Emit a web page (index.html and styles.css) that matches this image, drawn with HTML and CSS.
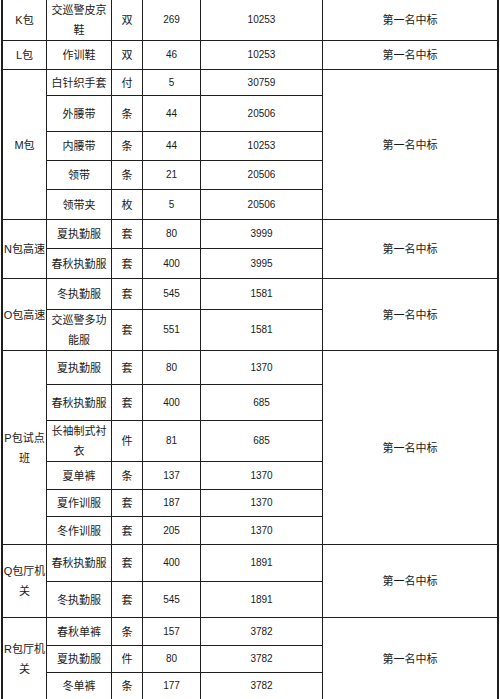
FILE: index.html
```html
<!DOCTYPE html>
<html lang="zh-CN">
<head>
<meta charset="utf-8">
<title>中标结果</title>
<link rel="stylesheet" href="styles.css">
</head>
<body>
<table class="bid">
  <colgroup>
    <col class="c-pkg">
    <col class="c-item">
    <col class="c-unit">
    <col class="c-qty">
    <col class="c-price">
    <col class="c-res">
  </colgroup>
  <tbody>
    <tr class="h38"><td class="pkg">K包</td><td>交巡警皮京鞋</td><td>双</td><td class="num">269</td><td class="num">10253</td><td class="res">第一名中标</td></tr>
    <tr class="h29"><td class="pkg">L包</td><td>作训鞋</td><td>双</td><td class="num">46</td><td class="num">10253</td><td class="res">第一名中标</td></tr>
    <tr class="h26"><td class="pkg" rowspan="5">M包</td><td>白针织手套</td><td>付</td><td class="num">5</td><td class="num">30759</td><td class="res" rowspan="5">第一名中标</td></tr>
    <tr class="h36"><td>外腰带</td><td>条</td><td class="num">44</td><td class="num">20506</td></tr>
    <tr class="h29"><td>内腰带</td><td>条</td><td class="num">44</td><td class="num">10253</td></tr>
    <tr class="h29"><td>领带</td><td>条</td><td class="num">21</td><td class="num">20506</td></tr>
    <tr class="h30"><td>领带夹</td><td>枚</td><td class="num">5</td><td class="num">20506</td></tr>
    <tr class="h29"><td class="pkg" rowspan="2">N包高速</td><td>夏执勤服</td><td>套</td><td class="num">80</td><td class="num">3999</td><td class="res" rowspan="2">第一名中标</td></tr>
    <tr class="h30"><td>春秋执勤服</td><td>套</td><td class="num">400</td><td class="num">3995</td></tr>
    <tr class="h31"><td class="pkg" rowspan="2">O包高速</td><td>冬执勤服</td><td>套</td><td class="num">545</td><td class="num">1581</td><td class="res" rowspan="2">第一名中标</td></tr>
    <tr class="h41"><td>交巡警多功能服</td><td>套</td><td class="num">551</td><td class="num">1581</td></tr>
    <tr class="h34"><td class="pkg" rowspan="6">P包试点班</td><td>夏执勤服</td><td>套</td><td class="num">80</td><td class="num">1370</td><td class="res" rowspan="6">第一名中标</td></tr>
    <tr class="h36"><td>春秋执勤服</td><td>套</td><td class="num">400</td><td class="num">685</td></tr>
    <tr class="h41"><td>长袖制式衬衣</td><td>件</td><td class="num">81</td><td class="num">685</td></tr>
    <tr class="h28"><td>夏单裤</td><td>条</td><td class="num">137</td><td class="num">1370</td></tr>
    <tr class="h27"><td>夏作训服</td><td>套</td><td class="num">187</td><td class="num">1370</td></tr>
    <tr class="h28"><td>冬作训服</td><td>套</td><td class="num">205</td><td class="num">1370</td></tr>
    <tr class="h37"><td class="pkg" rowspan="2">Q包厅机关</td><td>春秋执勤服</td><td>套</td><td class="num">400</td><td class="num">1891</td><td class="res" rowspan="2">第一名中标</td></tr>
    <tr class="h36"><td>冬执勤服</td><td>套</td><td class="num">545</td><td class="num">1891</td></tr>
    <tr class="h28"><td class="pkg" rowspan="3">R包厅机关</td><td>春秋单裤</td><td>条</td><td class="num">157</td><td class="num">3782</td><td class="res" rowspan="3">第一名中标</td></tr>
    <tr class="h27"><td>夏执勤服</td><td>件</td><td class="num">80</td><td class="num">3782</td></tr>
    <tr class="h27"><td>冬单裤</td><td>条</td><td class="num">177</td><td class="num">3782</td></tr>
  </tbody>
</table>
</body>
</html>
```
FILE: styles.css
```css
html, body {
  margin: 0;
  padding: 0;
  background: #ffffff;
}

.bid {
  margin: 0 0 0 1px;
  width: 498px;
  table-layout: fixed;
  border-collapse: separate;
  border-spacing: 0;
  border-left: 2px solid #1f1f1f;
  border-right: 1px solid #1f1f1f;
  border-bottom: 1px solid #1f1f1f;
  font-family: "Liberation Sans", "Noto Sans CJK SC", sans-serif;
  font-size: 11px;
  line-height: 20px;
  color: #1a1a1a;
}

.c-pkg { width: 44px; }
.c-item { width: 65px; }
.c-unit { width: 31px; }
.c-qty { width: 58px; }
.c-price { width: 122px; }
.c-res { width: 175px; }

.bid td {
  box-sizing: border-box;
  padding: 0;
  border-right: 1px solid #1f1f1f;
  border-bottom: 1px solid #1f1f1f;
  text-align: center;
  vertical-align: middle;
  word-break: break-all;
}

.bid td.num {
  font-size: 10px;
}

.h26 { height: 26px; }
.h27 { height: 27px; }
.h28 { height: 28px; }
.h29 { height: 29px; }
.h30 { height: 30px; }
.h31 { height: 31px; }
.h34 { height: 34px; }
.h36 { height: 36px; }
.h37 { height: 37px; }
.h38 { height: 38px; }
.h41 { height: 41px; }
```
